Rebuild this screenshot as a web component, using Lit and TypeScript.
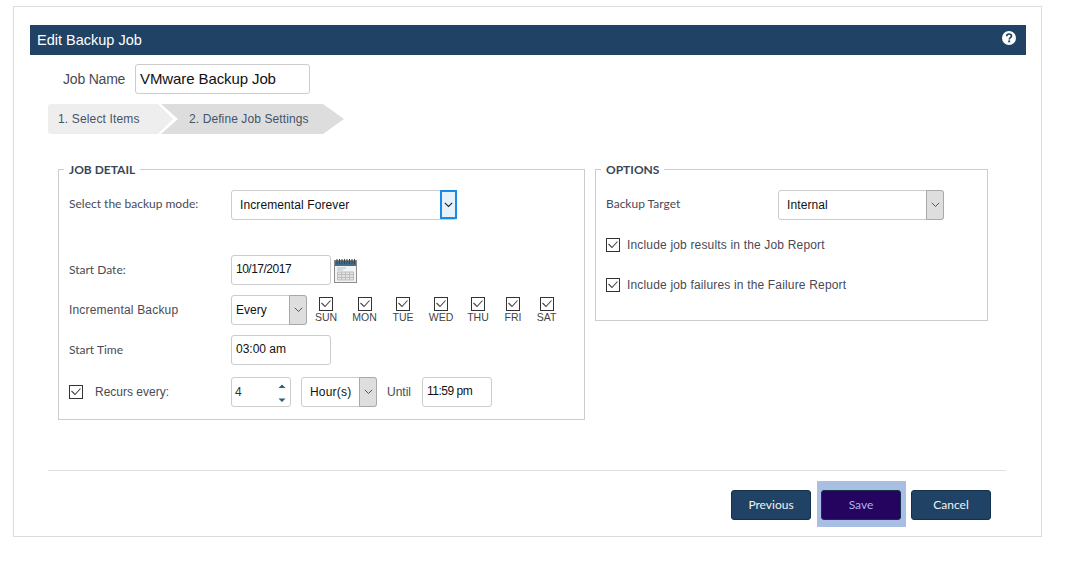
import { LitElement, html, css, svg } from "lit";
import { customElement } from "lit/decorators.js";

const chevron = svg`<svg class="chev" width="9" height="6" viewBox="0 0 9 6"><path d="M.8.8 4.500 4.500 8.200.8" fill="none" stroke="#555" stroke-width="1"/></svg>`;
const chevronDark = svg`<svg class="chev" width="9" height="6" viewBox="0 0 9 6"><path d="M.8.8 4.500 4.500 8.200.8" fill="none" stroke="#222" stroke-width="1.100"/></svg>`;
const tick = svg`<svg class="tick" width="14" height="14" viewBox="0 0 14 14"><rect x=".5" y=".5" width="13" height="13" fill="#fff" stroke="#333"/><path d="M2.500 6 6 9.500 11.500 3.500" fill="none" stroke="#444" stroke-width="1.100"/></svg>`;

const days = ["SUN", "MON", "TUE", "WED", "THU", "FRI", "SAT"];

@customElement("app-root")
export class AppRoot extends LitElement {
  static styles = css`
    :host { display: block; font-family: "Liberation Sans", Arial, sans-serif; font-size: 12px; color: #4a4a55; }
    * { box-sizing: border-box; }
    .card { margin: 6px 0 0 13px; width: 1029px; height: 531px; border: 1px solid #dcdcdc; padding: 18px 15px 0 16px; background: #fff; }
    .header { height: 30px; background: #204365; color: #fff; font-size: 14.500px; display: flex; align-items: center; justify-content: space-between; padding: 0 9px 0 7px; margin-bottom: 9px; }
    .help { display: block; margin-top: -4px; }
    .name-row { display: flex; align-items: center; gap: 10px; padding-left: 33px; height: 30px; }
    .name-row label { font-size: 14px; letter-spacing: -0.2px; width: 62px; white-space: nowrap; }
    .field { display: flex; align-items: center; height: 30px; border: 1px solid #ccc; border-radius: 3px; background: #fff; color: #111; font-size: 12px; padding-left: 4px; }
    .tx { padding-bottom: 2px; }
    .name-input { width: 175px; font-size: 15px; letter-spacing: -0.1px; }
    .crumbs { margin: 10px 0 0 18px; display: flex; height: 30px; width: 296px; }
    .crumb-a { width: 125px; margin-right: -12px; background: #eeeeee; clip-path: polygon(0 0, 110px 0, 125px 15px, 110px 30px, 0 30px); border-radius: 3px 0 0 3px; display: flex; align-items: center; padding-left: 10px; color: #44546a; letter-spacing: 0.15px; white-space: nowrap; }
    .crumb-b { flex: 1; background: #dddddd; clip-path: polygon(0 0, 162px 0, 183px 15px, 162px 30px, 0 30px, 17px 15px); display: flex; align-items: center; padding-left: 28px; color: #44546a; letter-spacing: 0.1px; white-space: nowrap; }
    .main { display: flex; gap: 10px; margin: 27px 0 0 28px; align-items: flex-start; }
    fieldset { margin: 0; padding: 0 10px; border: 1px solid #ccc; min-width: 0; }
    legend { padding: 2px 5px 0; margin-left: -5px; font-family: Lato, sans-serif; font-weight: bold; font-size: 12px; line-height: 14px; color: #3a4656; }
    .detail { width: 527px; height: 259px; }
    .options { width: 393px; height: 160px; }
    .row { display: flex; align-items: center; height: 30px; }
    .lab { width: 162px; flex: none; }
    .lab.up { margin-top: -3px; }
    .soft { font-family: Lato, sans-serif; font-size: 12px; padding-bottom: 2px; }
    .lab.up.soft { padding-bottom: 0; }
    .mode { margin-top: 13px; }
    .date-row { margin-top: 35px; }
    .inc-row { margin-top: 10px; align-items: flex-start; }
    .inc-row .lab { margin-top: 8px; letter-spacing: 0.18px; }
    .time-row { margin-top: 10px; }
    .rec-row { margin-top: 12px; }
    .sel { position: relative; padding-left: 8px; letter-spacing: 0.1px; }
    .sel-btn { position: absolute; right: -1px; top: -1px; bottom: -1px; width: 18px; background: #dedede; border: 1px solid #a9a9a9; border-radius: 0 3px 3px 0; display: flex; align-items: center; justify-content: center; }
    .sel-btn.focus { background: #e6f2fc; border: 2px solid #1a8ae6; border-radius: 0; width: 17px; bottom: 0; }
    .w226 { width: 226px; }
    .w100 { width: 100px; }
    .w76 { width: 76px; padding-left: 4px; letter-spacing: 0; }
    .tight { letter-spacing: -0.5px; }
    .cal { margin-left: 3px; display: block; }
    .days { display: grid; grid-template-columns: 38px 39px 38px 38px 36px 34px 33px; }
    .day { display: flex; flex-direction: column; align-items: center; font-size: 10.500px; line-height: 10px; color: #444; padding-top: 2px; }
    .day .tick { margin-bottom: 1px; }
    .recurs { width: 162px; flex: none; display: flex; align-items: center; gap: 12px; }
    .spin { width: 60px; position: relative; color: #333; padding-left: 3px; }
    .spin svg { position: absolute; right: 3px; top: 5px; }
    .hour { width: 76px; margin-left: 10px; padding-left: 8px; letter-spacing: 0.2px; }
    .until { margin: 0 11px 0 10px; }
    .until-in { width: 70px; }
    .target { margin-top: 13px; }
    .target .lab { width: 172px; }
    .w166 { width: 166px; }
    .check { display: flex; align-items: center; gap: 7px; height: 14px; letter-spacing: 0.17px; }
    .c1 { margin-top: 18px; }
    .c2 { margin-top: 26px; }
    .rule { height: 1px; background: #e0e0e0; margin: 50px 20px 0 18px; }
    .btns { display: flex; justify-content: flex-end; gap: 10px; margin: 19px 35px 0 0; isolation: isolate; }
    .btn { width: 80px; height: 30px; background: #204365; border: 1px solid #15304c; border-radius: 3px; color: #f2f2f2; font: 12px Lato, sans-serif; display: flex; align-items: center; justify-content: center; padding-bottom: 2px; position: relative; }
    .btn.save { background: #24045f; color: #b0b0f5; }
    .btn.save::before { content: ""; position: absolute; inset: -10px -6px -8px -5px; background: #a8bfe3; z-index: -1; }
  `;

  render() {
    return html`<div class="card">
      <div class="header">
        <span>Edit Backup Job</span>
        <svg class="help" width="16" height="16" viewBox="0 0 16 16"><circle cx="8" cy="8" r="7" fill="#fff"/><path d="M5.600 6.300C5.700 4.800 6.700 4 8.100 4c1.400 0 2.400.8 2.400 2 0 1.700-2.200 1.700-2.200 3.400" fill="none" stroke="#204365" stroke-width="1.700"/><rect x="7.200" y="10.400" width="2" height="1.900" fill="#204365"/></svg>
      </div>
      <div class="name-row">
        <label>Job Name</label>
        <div class="field name-input tx">VMware Backup Job</div>
      </div>
      <div class="crumbs">
        <div class="crumb-a">1. Select Items</div>
        <div class="crumb-b">2. Define Job Settings</div>
      </div>
      <div class="main">
        <fieldset class="detail">
          <legend>JOB DETAIL</legend>
          <div class="row mode">
            <div class="lab up soft">Select the backup mode:</div>
            <div class="field sel w226">Incremental Forever
              <div class="sel-btn focus">${chevronDark}</div>
            </div>
          </div>
          <div class="row date-row">
            <div class="lab soft">Start Date:</div>
            <div class="field w100 tx tight">10/17/2017</div>
            <svg class="cal" width="23" height="25" viewBox="0 0 23 25">
              <rect x=".5" y="2.500" width="22" height="22" fill="#f3f3f3" stroke="#8c8c8c"/>
              <rect x="1" y="3" width="21" height="5" fill="#3c6d92"/>
              <path d="M3 1v5M5.500 1v5M8 1v5M10.500 1v5M13 1v5M15.500 1v5M18 1v5M20.500 1v5" stroke="#444" stroke-width="1"/>
              <path d="M3 10h9M3 12h6" stroke="#a9c3d8"/>
              <path d="M3.500 14h16v8h-16zM3.500 16.500h16M3.500 19.500h16M7.500 14v8M11.500 14v8M15.500 14v8" fill="#e2e2e2" stroke="#bdbdbd"/>
            </svg>
          </div>
          <div class="row inc-row">
            <div class="lab">Incremental Backup</div>
            <div class="field sel w76">Every
              <div class="sel-btn">${chevron}</div>
            </div>
            <div class="days">
              ${days.map((d) => html`<div class="day">${tick}<span>${d}</span></div>`)}
            </div>
          </div>
          <div class="row time-row">
            <div class="lab soft">Start Time</div>
            <div class="field w100 tx">03:00 am</div>
          </div>
          <div class="row rec-row">
            <div class="recurs">${tick}<span>Recurs every:</span></div>
            <div class="field spin">4
              <svg width="10" height="20" viewBox="0 0 10 20"><path d="M1.500 5 5 1.500 8.500 5zM1.500 15.500h7L5 19z" fill="#2f607f"/></svg>
            </div>
            <div class="field sel hour">Hour(s)
              <div class="sel-btn">${chevron}</div>
            </div>
            <span class="until">Until</span>
            <div class="field until-in tx tight">11:59 pm</div>
          </div>
        </fieldset>
        <fieldset class="options">
          <legend>OPTIONS</legend>
          <div class="row target">
            <div class="lab up soft">Backup Target</div>
            <div class="field sel w166">Internal
              <div class="sel-btn">${chevron}</div>
            </div>
          </div>
          <div class="check c1">${tick}<span>Include job results in the Job Report</span></div>
          <div class="check c2">${tick}<span>Include job failures in the Failure Report</span></div>
        </fieldset>
      </div>
      <div class="rule"></div>
      <div class="btns">
        <div class="btn">Previous</div>
        <div class="btn save">Save</div>
        <div class="btn">Cancel</div>
      </div>
    </div>`;
  }
}
